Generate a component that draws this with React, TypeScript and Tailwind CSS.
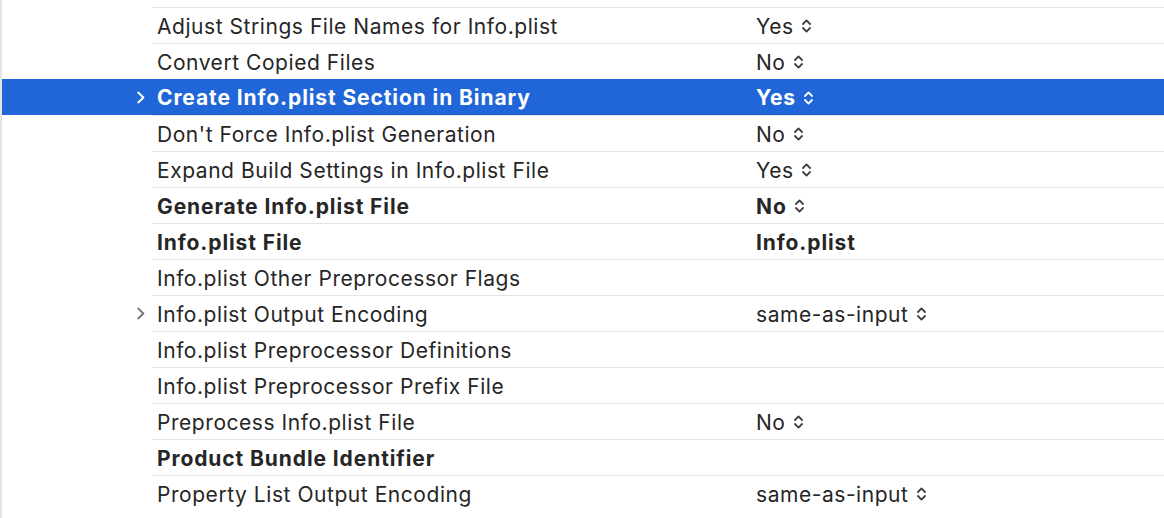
import React from 'react';

interface Row {
  label: string;
  value?: string;
  bold?: boolean;
  popup?: boolean;
  expandable?: boolean;
  selected?: boolean;
}

const rows: Row[] = [
  { label: 'Adjust Strings File Names for Info.plist', value: 'Yes', popup: true },
  { label: 'Convert Copied Files', value: 'No', popup: true },
  { label: 'Create Info.plist Section in Binary', value: 'Yes', popup: true, expandable: true, selected: true },
  { label: "Don't Force Info.plist Generation", value: 'No', popup: true },
  { label: 'Expand Build Settings in Info.plist File', value: 'Yes', popup: true },
  { label: 'Generate Info.plist File', value: 'No', popup: true, bold: true },
  { label: 'Info.plist File', value: 'Info.plist', bold: true },
  { label: 'Info.plist Other Preprocessor Flags' },
  { label: 'Info.plist Output Encoding', value: 'same-as-input', popup: true, expandable: true },
  { label: 'Info.plist Preprocessor Definitions' },
  { label: 'Info.plist Preprocessor Prefix File' },
  { label: 'Preprocess Info.plist File', value: 'No', popup: true },
  { label: 'Product Bundle Identifier', bold: true },
  { label: 'Property List Output Encoding', value: 'same-as-input', popup: true },
];

const Disclosure = ({ light }: { light: boolean }) => (
  <svg width="10" height="13" viewBox="0 0 10 13" className={light ? 'text-white' : 'text-[#7a7a7a]'}>
    <path d="M2.2 1.6 L7.4 6.5 L2.2 11.4" fill="none" stroke="currentColor" strokeWidth="2" strokeLinecap="round" strokeLinejoin="round" />
  </svg>
);

const UpDown = ({ light }: { light: boolean }) => (
  <svg width="11" height="16" viewBox="0 0 11 16" className={light ? 'text-white' : 'text-[#3f3f3f]'}>
    <path d="M2 6 L5.5 2.4 L9 6 M2 10 L5.5 13.6 L9 10" fill="none" stroke="currentColor" strokeWidth="1.8" strokeLinecap="round" strokeLinejoin="round" />
  </svg>
);

const SettingRow = ({ row }: { row: Row }) => {
  const sel = !!row.selected;
  const weight = sel || row.bold ? 'font-bold tracking-[0.9px]' : 'font-normal tracking-[0.55px]';
  return (
    <div className={`flex h-[36px] ${sel ? 'bg-[#2166d8] text-white' : 'text-[#262626]'}`}>
      <div className="w-[150px] flex items-center justify-end pr-[6px] pt-px">
        {row.expandable && <Disclosure light={sel} />}
      </div>
      <div className={`flex-1 flex border-t pt-px ${sel ? 'border-[#2166d8] border-b border-b-[#1d5cc4]' : 'border-[#e4e4e4]'}`}>
        <div className={`w-[604px] pl-[5px] flex items-center ${weight}`}>{row.label}</div>
        <div className={`flex-1 flex items-center gap-[7px] ${weight}`}>
          {row.value && <span>{row.value}</span>}
          {row.popup && <UpDown light={sel} />}
        </div>
      </div>
    </div>
  );
};

export default function App() {
  return (
    <div
      className="w-[1164px] h-[518px] bg-white border-l-2 border-[#e4e4e4] pt-[7px] overflow-hidden text-[21px] leading-none"
      style={{ fontFamily: 'Inter, "Liberation Sans", sans-serif' }}
    >
      {rows.map((r) => (
        <SettingRow key={r.label} row={r} />
      ))}
    </div>
  );
}
